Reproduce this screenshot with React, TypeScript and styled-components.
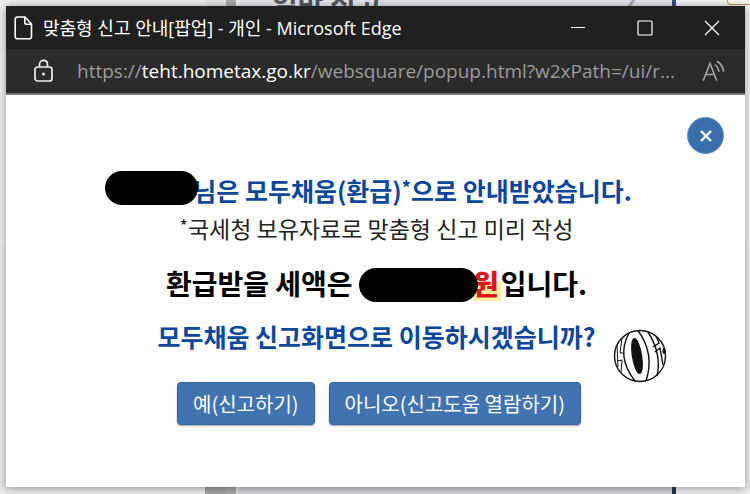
import React from "react";
import styled, { createGlobalStyle } from "styled-components";

const Global = createGlobalStyle`
  * { box-sizing: border-box; }
  html, body, #root { height: 100%; }
  body { margin: 0; overflow: hidden; background: #efefef; }
`;

const ui = `"Open Sans", "Noto Sans CJK KR", sans-serif`;
const kr = `"Noto Sans CJK KR", sans-serif`;

const Desktop = styled.div`
  position: relative;
  display: flex;
  min-height: 100vh;
  padding: 6px 5px 7px 6px;
`;

const Backdrop = styled.div`
  position: absolute;
  inset: 0;
  display: grid;
  grid-template-columns: 205fr 21fr 10fr 3fr 433fr 4fr 74fr;
  overflow: hidden;
`;

const Strip = styled.div<{ $top: string; $bottom: string }>`
  background: linear-gradient(${(p) => p.$top} 50%, ${(p) => p.$bottom} 50%);
`;

const PagePanel = styled(Strip)`
  display: flex;
  justify-content: space-between;
  align-items: flex-start;
  padding: 0 35px 0 33px;
`;

const PageTitle = styled.span`
  margin-top: -11px;
  font: 700 28px/28px ${kr};
  color: #55575c;
`;

const PageTab = styled(Strip)`
  display: flex;
  justify-content: flex-end;
  align-items: flex-start;
`;

const TabCorner = styled.span`
  width: 23px;
  height: 5px;
  border: solid #b59a4a;
  border-width: 0 0 1px 1px;
  border-radius: 0 0 0 4px;
  background: #fbf9ef;
`;

const Window = styled.section`
  position: relative;
  flex: 1;
  min-width: 0;
  display: flex;
  flex-direction: column;
  background: #fff;
  box-shadow: 0 1px 8px rgba(0, 0, 0, 0.4);
`;

const TitleBar = styled.header`
  display: flex;
  align-items: center;
  height: 43px;
  padding-left: 8px;
  background: #202020;
  color: #fff;
`;

const Title = styled.h1`
  flex: 1;
  min-width: 0;
  margin: 0 0 0 10px;
  overflow: hidden;
  font: 400 18px/24px ${ui};
  white-space: nowrap;
`;

const WindowButton = styled.button`
  display: grid;
  place-items: center;
  width: 67px;
  height: 43px;
  padding: 0;
  border: 0;
  background: none;
  color: #fff;
`;

const AddressBar = styled.div`
  display: flex;
  align-items: center;
  height: 46px;
  padding: 0 19px 0 28px;
  border-bottom: 2px solid #777;
  background: #2b2b2b;
  color: #a0a0a0;
`;

const Address = styled.a`
  flex: 1;
  min-width: 0;
  margin-left: 24px;
  overflow: hidden;
  font: 400 19px/28px ${ui};
  color: #9b9b9b;
  text-decoration: none;
  white-space: nowrap;
`;

const Host = styled.span`
  color: #fff;
`;

const IconButton = styled.button`
  display: grid;
  place-items: center;
  padding: 0;
  border: 0;
  background: none;
  color: inherit;
`;

const Content = styled.main`
  position: relative;
  flex: 1;
  display: flex;
  flex-direction: column;
  align-items: center;
  padding: 76px 0 0 2px;
  font-family: ${kr};
`;

const CloseButton = styled.button`
  position: absolute;
  top: 22px;
  right: 21px;
  display: grid;
  place-items: center;
  width: 37px;
  height: 37px;
  padding: 0;
  border: 1px solid #6b95c6;
  border-radius: 50%;
  background: #3a6fae;
  color: #fff;
`;

const Line = styled.p<{ $size: number; $bold?: boolean; $color: string; $gap?: number }>`
  display: flex;
  align-items: center;
  height: 38px;
  margin: ${(p) => p.$gap ?? 0}px 0 0;
  font-size: ${(p) => p.$size}px;
  font-weight: ${(p) => (p.$bold ? 700 : 400)};
  line-height: 38px;
  color: ${(p) => p.$color};
  white-space: pre;
`;

const Star = styled.sup`
  align-self: flex-start;
  font-size: 18px;
  line-height: 32px;
`;

const Redaction = styled.span<{ $width: number; $align: "start" | "end"; $lead?: number }>`
  position: relative;
  align-self: flex-${(p) => p.$align};
  width: ${(p) => p.$width}px;
  height: 34px;
  margin: 0 -5px 0 ${(p) => p.$lead ?? 0}px;
  border-radius: 17px;
  background: #000;
`;

const Amount = styled.span`
  display: flex;
  align-self: stretch;
  align-items: center;
`;

const Won = styled.strong`
  padding-right: 2px;
  line-height: 36px;
  color: #d8171f;
  background: linear-gradient(transparent 45%, #fff0a0 45%);
`;

const Actions = styled.div`
  display: flex;
  gap: 14px;
  margin: 27px 0 0 5px;
`;

const ActionButton = styled.button`
  height: 43px;
  padding: 0 15px;
  border: 1px solid #33659f;
  border-radius: 4px;
  background: #4273b1;
  box-shadow: 0 1px 2px rgba(0, 0, 0, 0.35);
  color: #fff;
  font: 400 20px/30px ${kr};
  white-space: nowrap;
`;

const Watermark = styled.svg`
  position: absolute;
  top: 234px;
  left: calc(50% + 237px);
`;

export default function App() {
  return (
    <>
      <Global />
      <Desktop>
        <Backdrop aria-hidden="true">
          <Strip $top="#eeeeee" $bottom="#eaeaea" />
          <Strip $top="#e2e2e2" $bottom="#a2a2a2" />
          <Strip $top="#a8a8a8" $bottom="#a8a8a8" />
          <Strip $top="#eeeeee" $bottom="#dddddd" />
          <PagePanel $top="#e2e4e9" $bottom="#cfd1d5">
            <PageTitle>일반 신고</PageTitle>
            <svg width="10" height="6" stroke="#a9adba" strokeWidth="3"><path d="M8 -2L2 7" /></svg>
          </PagePanel>
          <Strip $top="#34507f" $bottom="#26324f" />
          <PageTab $top="#f2f2f4" $bottom="#ececec">
            <TabCorner />
          </PageTab>
        </Backdrop>
        <Window>
          <TitleBar>
            <svg width="19" height="24" viewBox="0 0 19 24" fill="none" stroke="#fff" strokeWidth="1.6" strokeLinejoin="round">
              <path d="M3.5 1H11L17.5 8V20.5Q17.5 22.8 15.2 22.8H3.5Q1.2 22.8 1.2 20.5V3.3Q1.2 1 3.5 1Z" />
              <path d="M10.8 1.2V6.5Q10.8 8.2 12.5 8.2H17.3" />
            </svg>
            <Title>맞춤형 신고 안내[팝업] - 개인 - Microsoft Edge</Title>
            <WindowButton aria-label="최소화">
              <svg width="16" height="16" stroke="#fff"><path d="M1 7.5H15" /></svg>
            </WindowButton>
            <WindowButton aria-label="최대화">
              <svg width="16" height="16" fill="none" stroke="#fff" strokeWidth="1.2"><rect x="1" y="1" width="14" height="14" rx="1" /></svg>
            </WindowButton>
            <WindowButton aria-label="창 닫기">
              <svg width="16" height="16" stroke="#fff" strokeWidth="1.3"><path d="M1 1L15 15M15 1L1 15" /></svg>
            </WindowButton>
          </TitleBar>
          <AddressBar>
            <IconButton aria-label="사이트 정보">
              <svg width="19" height="24" viewBox="0 0 19 24" fill="none" stroke="#eee" strokeWidth="1.7">
                <rect x="1" y="8" width="17" height="14" rx="2.5" />
                <path d="M5.5 8V5.5C5.5 0 13.5 0 13.5 5.5V8" />
                <circle cx="9.5" cy="15" r="1.5" fill="#eee" stroke="none" />
              </svg>
            </IconButton>
            <Address href="#">
              https://<Host>teht.hometax.go.kr</Host>/websquare/popup.html?w2xPath=/ui/r...
            </Address>
            <IconButton aria-label="소리내어 읽기">
              <svg width="24" height="24" viewBox="0 0 24 24" fill="none" stroke="#a6a6a6" strokeWidth="1.6" strokeLinecap="round">
                <path d="M1.5 21L8 4.5L14.5 21M4 15.5H12.2" />
                <path d="M13.5 6Q16 8 16.8 12M15.5 2.5Q20.5 6 21.5 12" />
              </svg>
            </IconButton>
          </AddressBar>
          <Content>
            <CloseButton aria-label="닫기">
              <svg width="14" height="14" stroke="#fff" strokeWidth="2.4"><path d="M2 2L12 12M12 2L2 12" /></svg>
            </CloseButton>
            <Line $size={25} $bold $color="#0b479d">
              <Redaction $width={93} $align="start" $lead={-16} />
              <span>님은 모두채움(환급)</span>
              <Star>*</Star>
              <span>으로 안내받았습니다.</span>
            </Line>
            <Line $size={23} $color="#222">
              <Star>*</Star>
              <span>국세청 보유자료로 맞춤형 신고 미리 작성</span>
            </Line>
            <Line $size={28} $bold $color="#000" $gap={17}>
              <span>환급받을 세액은 </span>
              <Amount>
                <Redaction $width={119} $align="end" />
                <Won>원</Won>
              </Amount>
              <span>입니다.</span>
            </Line>
            <Line $size={25} $bold $color="#0b479d" $gap={15}>
              모두채움 신고화면으로 이동하시겠습니까?
            </Line>
            <Actions>
              <ActionButton>예(신고하기)</ActionButton>
              <ActionButton>아니오(신고도움 열람하기)</ActionButton>
            </Actions>
            <Watermark width="54" height="54" viewBox="0 0 54 54" fill="none" stroke="#111" strokeWidth="1.4" aria-hidden="true">
              <circle cx="27" cy="27" r="25.5" />
              <path d="M4 16L5 38M9 9L7 24L10 24M4 32L9 31L8 43" strokeWidth="1" />
              <path d="M16 4Q3 28 22 52M25 1.5Q42 25 33 52" />
              <path d="M35 3Q49 25 44 47" />
              <path d="M40 18L46 14L43 7M42 23L47 19L50 36" />
              <ellipse cx="24" cy="27" rx="4.5" ry="17.5" transform="rotate(-9 24 27)" fill="#111" />
              <ellipse cx="51" cy="22" rx="1.5" ry="3" fill="#111" stroke="none" />
            </Watermark>
          </Content>
        </Window>
      </Desktop>
    </>
  );
}
